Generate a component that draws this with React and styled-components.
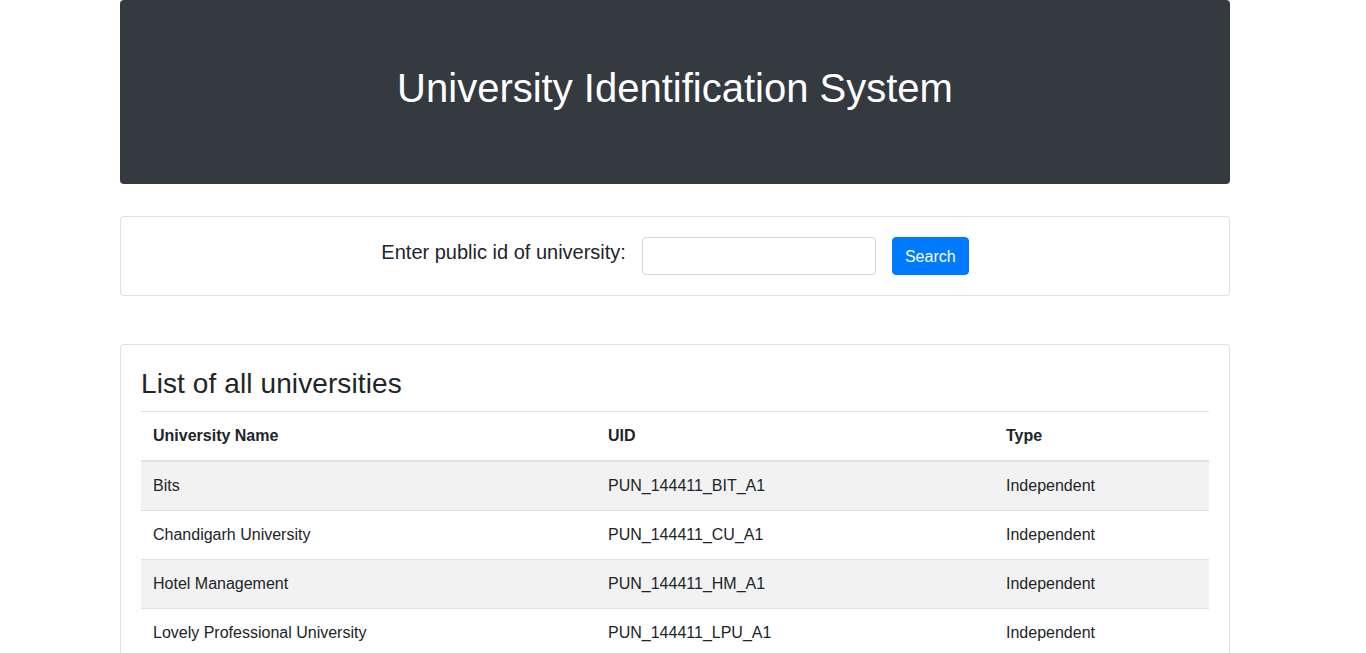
import React from "react";
import styled, { createGlobalStyle } from "styled-components";

const Global = createGlobalStyle`
  html { overflow: hidden; }
  body {
    margin: 0;
    background: #fff;
    color: #212529;
    font-family: "Liberation Sans", Arial, Helvetica, sans-serif;
    font-size: 16px;
    line-height: 1.5;
  }
  * { box-sizing: border-box; }
`;

const Page = styled.div`
  padding-right: 16px;
`;

const Container = styled.div`
  width: 1110px;
  margin: 0 auto;
  display: flex;
  flex-direction: column;
`;

const Jumbotron = styled.header`
  background: #343a40;
  border-radius: 4px;
  padding: 64px 32px;
  margin-bottom: 32px;
  text-align: center;
`;

const Title = styled.h1`
  margin: 0 0 8px;
  color: #fff;
  font-size: 40px;
  font-weight: 400;
  line-height: 1.2;
`;

const Card = styled.section`
  border: 1px solid rgba(0, 0, 0, 0.125);
  border-radius: 4px;
  background: #fff;
  padding: 20px;
  margin-bottom: ${(p) => p.$mb || 0}px;
`;

const SearchForm = styled.form`
  display: flex;
  justify-content: center;
  align-items: flex-start;
  gap: 16px;
`;

const Label = styled.label`
  font-size: 20px;
  line-height: 30px;
  height: 38px;
`;

const Input = styled.input`
  width: 234px;
  height: 38px;
  border: 1px solid #ced4da;
  border-radius: 4px;
  padding: 6px 12px;
  font-size: 16px;
  font-family: inherit;
  outline: none;
`;

const Button = styled.button`
  height: 38px;
  padding: 7px 12px 5px;
  border: 1px solid #007bff;
  background: #007bff;
  color: #fff;
  border-radius: 4px;
  font-size: 16px;
  font-family: inherit;
  line-height: 24px;
  cursor: pointer;
`;

const CardTitle = styled.h3`
  margin: 2px 0 10px;
  font-size: 28px;
  font-weight: 400;
  line-height: 1.2;
  letter-spacing: 0.1px;
`;

const Table = styled.table`
  width: 100%;
  border-collapse: collapse;
`;

const Th = styled.th`
  text-align: left;
  padding: 12px;
  font-weight: 700;
  border-top: 1px solid #dee2e6;
  border-bottom: 2px solid #dee2e6;
  width: ${(p) => p.$w};
`;

const Tr = styled.tr`
  background: ${(p) => (p.$striped ? "rgba(0,0,0,0.05)" : "transparent")};
`;

const Td = styled.td`
  padding: 12px;
  border-top: 1px solid #dee2e6;
  vertical-align: top;
`;

const rows = [
  ["Bits", "PUN_144411_BIT_A1", "Independent"],
  ["Chandigarh University", "PUN_144411_CU_A1", "Independent"],
  ["Hotel Management", "PUN_144411_HM_A1", "Independent"],
  ["Lovely Professional University", "PUN_144411_LPU_A1", "Independent"],
];

export default function App() {
  return (
    <Page>
      <Global />
      <Container>
        <Jumbotron>
          <Title>University Identification System</Title>
        </Jumbotron>
        <Card $mb={48}>
          <SearchForm onSubmit={(e) => e.preventDefault()}>
            <Label htmlFor="uid">Enter public id of university:</Label>
            <Input id="uid" type="text" />
            <Button type="submit">Search</Button>
          </SearchForm>
        </Card>
        <Card>
          <CardTitle>List of all universities</CardTitle>
          <Table>
            <thead>
              <tr>
                <Th $w="455px">University Name</Th>
                <Th $w="398px">UID</Th>
                <Th $w="215px">Type</Th>
              </tr>
            </thead>
            <tbody>
              {rows.map((r, i) => (
                <Tr key={r[1]} $striped={i % 2 === 0}>
                  <Td>{r[0]}</Td>
                  <Td>{r[1]}</Td>
                  <Td>{r[2]}</Td>
                </Tr>
              ))}
            </tbody>
          </Table>
        </Card>
      </Container>
    </Page>
  );
}
